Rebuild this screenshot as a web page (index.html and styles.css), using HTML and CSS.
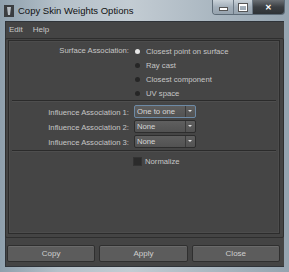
FILE: index.html
```html
<!DOCTYPE html>
<html lang="en">
<head>
    <meta charset="UTF-8">
    <title>Copy Skin Weights Options</title>
    <link rel="stylesheet" href="styles.css">
</head>
<body>
<div class="window">
    <!-- title bar -->
    <div class="titlebar">
        <svg class="app-icon" width="10" height="12" viewBox="0 0 10 12">
            <rect x="0" y="0" width="10" height="12" fill="#3a3d40"/>
            <path d="M3 2 L7 2 L6 10 L4 10 Z" fill="#b8bec4"/>
        </svg>
        <span class="title">Copy Skin Weights Options</span>
        <div class="controls">
            <div class="ctl ctl-min"><span class="min-bar"></span></div>
            <div class="ctl ctl-max"><span class="max-box"></span></div>
            <div class="ctl ctl-close">&#x2715;</div>
        </div>
    </div>

    <div class="client">
        <div class="menubar">
            <span class="menu-item">Edit</span>
            <span class="menu-item">Help</span>
        </div>

        <div class="group">
            <div class="panel">
                <div class="form">
                    <div class="label">Surface Association:</div>
                    <div class="radios">
                        <div class="radio-row"><span class="radio checked"></span>Closest point on surface</div>
                        <div class="radio-row"><span class="radio"></span>Ray cast</div>
                        <div class="radio-row"><span class="radio"></span>Closest component</div>
                        <div class="radio-row"><span class="radio"></span>UV space</div>
                    </div>
                </div>

                <div class="separator"></div>

                <div class="form">
                    <div class="label field-label">Influence Association 1:</div>
                    <div class="dropdown focus"><span class="value">One to one</span><span class="arrow"></span></div>
                    <div class="label field-label">Influence Association 2:</div>
                    <div class="dropdown"><span class="value">None</span><span class="arrow"></span></div>
                    <div class="label field-label">Influence Association 3:</div>
                    <div class="dropdown"><span class="value">None</span><span class="arrow"></span></div>
                </div>

                <div class="separator"></div>

                <div class="form">
                    <div class="label"></div>
                    <div class="check-row"><span class="checkbox"></span>Normalize</div>
                </div>
            </div>
        </div>

        <div class="buttons">
            <button class="btn">Copy</button>
            <button class="btn">Apply</button>
            <button class="btn">Close</button>
        </div>
    </div>
</div>
</body>
</html>
```

FILE: styles.css
```css
body {
    margin: 0;
    font-family: "Liberation Sans", Arial, sans-serif;
    background: #9aa7b2;
}
.window {
    width: 289px;
    height: 272px;
    display: flex;
    flex-direction: column;
    padding: 0 5px 5px 5px;
    box-sizing: border-box;
    background: linear-gradient(to right, #8fa0ad 0%, #b4c0c9 20%, #c3ccd3 45%, #a9b6c0 75%, #95a4b0 100%);
}
.titlebar {
    height: 21px;
    display: flex;
    align-items: flex-start;
    flex-shrink: 0;
}
.app-icon {
    margin: 5px 4px 0 -1px;
}
.title {
    font-size: 9.5px;
    color: #111;
    margin-top: 5px;
}
.controls {
    margin-left: auto;
    margin-right: -1px;
    display: flex;
    height: 14px;
    border: 1px solid #5d6b77;
    border-top: none;
    border-radius: 0 0 4px 4px;
    overflow: hidden;
}
.ctl {
    height: 14px;
    display: flex;
    align-items: center;
    justify-content: center;
    background: linear-gradient(#c9d2d9, #a3afba 50%, #96a3ae);
    border-right: 1px solid #6b7884;
}
.ctl-min {
    width: 20px;
}
.ctl-max {
    width: 18px;
}
.ctl-close {
    width: 31px;
    border-right: none;
    background: linear-gradient(#6a6f74, #3b3f43 50%, #2e3236);
    color: #fff;
    font-size: 8px;
    font-weight: bold;
}
.min-bar {
    width: 7px;
    height: 2px;
    background: #fff;
    border: 1px solid #555;
    margin-top: 4px;
}
.max-box {
    width: 6px;
    height: 4px;
    border: 1px solid #fff;
    border-top-width: 2px;
    outline: 1px solid #555;
}
.client {
    flex: 1;
    background: #444444;
    display: flex;
    flex-direction: column;
    border: 1px solid #2f3338;
    border-right-width: 0;
}
.menubar {
    height: 15px;
    display: flex;
    align-items: center;
    padding-left: 3px;
    gap: 10px;
    font-size: 8px;
    color: #c8c8c8;
    flex-shrink: 0;
}
.group {
    margin: 1px 0 0 -1px;
    border: 1px solid #2e2e2e;
    border-radius: 2px;
    padding: 1px 3px 3px 2px;
    height: 200px;
    box-sizing: border-box;
}
.panel {
    height: 100%;
    box-sizing: border-box;
    border: 1px solid #2c2c2c;
    box-shadow: inset 0 0 0 1px #4c4c4c;
    background: #454545;
    padding-top: 3px;
    font-size: 7.7px;
    color: #c6c6c6;
}
.form {
    display: grid;
    grid-template-columns: 120px auto;
    column-gap: 5px;
    align-items: center;
}
.label {
    text-align: right;
    align-self: start;
    line-height: 14px;
}
.field-label {
    align-self: center;
}
.radios {
    display: flex;
    flex-direction: column;
}
.radio-row {
    height: 14px;
    display: flex;
    align-items: center;
}
.radio {
    width: 5px;
    height: 5px;
    border-radius: 50%;
    background: #262626;
    margin: 0 6px 0 1px;
}
.radio.checked {
    background: #e6e6e6;
}
.separator {
    height: 1px;
    background: #2b2b2b;
    border-bottom: 1px solid #4e4e4e;
    margin: 0 3px 3px 3px;
}
.dropdown {
    width: 62px;
    height: 13px;
    box-sizing: border-box;
    border: 1px solid #2d2d2d;
    border-radius: 2px;
    background: linear-gradient(#5f5f5f, #525252);
    display: flex;
    align-items: center;
    margin-bottom: 2px;
}
.dropdown.focus {
    border-color: #6d8aa6;
}
.dropdown .value {
    flex: 1;
    padding-left: 2px;
    color: #d6d6d6;
}
.dropdown .arrow {
    width: 9px;
    height: 100%;
    border-left: 1px solid #3a3a3a;
    position: relative;
}
.dropdown .arrow::after {
    content: "";
    position: absolute;
    left: 2px;
    top: 4px;
    border-left: 2px solid transparent;
    border-right: 2px solid transparent;
    border-top: 2px solid #e0e0e0;
}
.check-row {
    display: flex;
    align-items: center;
    height: 12px;
    margin-top: 0;
}
.checkbox {
    width: 9px;
    height: 9px;
    box-sizing: border-box;
    background: #2b2b2b;
    border: 1px solid #333;
    margin-right: 3px;
    margin-left: -1px;
}
.buttons {
    display: flex;
    gap: 4px;
    padding: 0 4px 0 1px;
    margin-top: 7px;
}
.btn {
    flex: 1;
    height: 17px;
    background: #5c5c5c;
    border: 1px solid #2f2f2f;
    border-radius: 2px;
    box-shadow: inset 0 1px 0 #6a6a6a;
    color: #cfcfcf;
    font-family: "Liberation Sans", Arial, sans-serif;
    font-size: 8px;
    padding: 0;
}
```
